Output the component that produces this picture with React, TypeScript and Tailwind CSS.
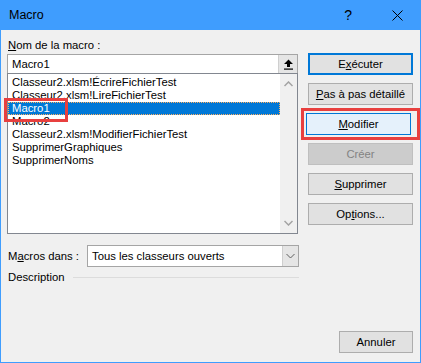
const items = [
  "Classeur2.xlsm!ÉcrireFichierTest",
  "Classeur2.xlsm!LireFichierTest",
  "Macro1",
  "Macro2",
  "Classeur2.xlsm!ModifierFichierTest",
  "SupprimerGraphiques",
  "SupprimerNoms",
];

const Btn = ({
  children,
  variant = "normal",
}: {
  children: React.ReactNode;
  variant?: "normal" | "default" | "hover" | "disabled";
}) => {
  const styles = {
    normal: "border border-[#adadad] bg-[#e1e1e1] text-black",
    default: "border-2 border-[#0078d7] bg-[#e1e1e1] text-black",
    hover: "border border-[#0078d7] bg-[#e5f1fb] text-black",
    disabled: "border border-[#bfbfbf] bg-[#cccccc] text-[#838383]",
  };
  return (
    <div className={`h-[22px] w-[105px] flex items-center justify-center ${styles[variant]}`}>
      {children}
    </div>
  );
};

const App = () => {
  return (
    <div
      className="w-[421px] h-[363px] flex flex-col text-[11.3px] text-black bg-[#f0f0f0]"
      style={{ fontFamily: '"Liberation Sans", Arial, sans-serif' }}
    >
      {/* title bar */}
      <div className="h-[30px] bg-[#3f9dfe] flex items-center pl-[9px] shrink-0">
        <span className="text-[12.5px] text-black">Macro</span>
        <span className="ml-auto mr-[40px] text-[14px]">?</span>
        <svg width="11" height="11" viewBox="0 0 11 11" className="mr-[18px]">
          <path d="M0.5 0.5 L10.5 10.5 M10.5 0.5 L0.5 10.5" stroke="#000" strokeWidth="1" />
        </svg>
      </div>

      <div className="flex-1 border-x border-b border-[#3f9dfe] flex flex-col">
        <div className="flex pl-[6px] pt-[7px]">
          {/* left column */}
          <div className="w-[291px] flex flex-col">
            <div className="h-[17px] leading-[16px] pl-[1px]">
              <u>N</u>om de la macro :
            </div>
            <div className="h-[20px] border border-[#a5a5a5] bg-white flex items-center">
              <span className="pl-[4px] flex-1">Macro1</span>
              <div className="w-[19px] h-[18px] bg-[#e5e5e5] border-l border-[#cfcfcf] flex items-center justify-center">
                <svg width="11" height="11" viewBox="0 0 11 11">
                  <path d="M5.5 0.5 L10 5 L7 5 L7 8 L4 8 L4 5 L1 5 Z" fill="#000" />
                  <rect x="1" y="9.5" width="9" height="1.2" fill="#000" />
                </svg>
              </div>
            </div>
            <div className="relative mt-[-1px] h-[161px] border border-[#828790] bg-white flex">
              <div className="flex-1 pt-[2px]">
                {items.map((it) =>
                  it === "Macro1" ? (
                    <div
                      key={it}
                      className="h-[13px] leading-[11px] bg-[#0078d7] text-white pl-[3px] border border-dotted border-[#ffb060]"
                    >
                      {it}
                    </div>
                  ) : (
                    <div key={it} className="h-[13px] leading-[13px] pl-[4px]">
                      {it}
                    </div>
                  )
                )}
              </div>
              <div className="w-[17px] bg-[#f0f0f0] flex flex-col items-center justify-between py-[7px]">
                <svg width="9" height="6" viewBox="0 0 9 6">
                  <path d="M0.5 5 L4.5 1 L8.5 5" stroke="#a3a3a3" strokeWidth="1.5" fill="none" />
                </svg>
                <svg width="9" height="6" viewBox="0 0 9 6">
                  <path d="M0.5 1 L4.5 5 L8.5 1" stroke="#a3a3a3" strokeWidth="1.5" fill="none" />
                </svg>
              </div>
              {/* red highlight over Macro1 */}
              <div className="absolute left-[-4px] top-[24px] w-[64px] h-[24px] border-[3px] border-[#e8403f]" />
            </div>
          </div>

          {/* right column */}
          <div className="ml-[10px] pt-[16px] flex flex-col gap-[8px]">
            <Btn variant="default">
              E<u>x</u>écuter
            </Btn>
            <Btn>
              <u>P</u>as à pas détaillé
            </Btn>
            <div className="-mx-[7px] -my-[5px] border-[3px] border-[#e8403f] p-[2px]">
              <Btn variant="hover">
                <u>M</u>odifier
              </Btn>
            </div>
            <Btn variant="disabled">Créer</Btn>
            <Btn>
              <u>S</u>upprimer
            </Btn>
            <Btn>
              Op<u>t</u>ions...
            </Btn>
          </div>
        </div>

        <div className="pl-[6px] mt-[11px] flex items-center w-[298px]">
          <span className="w-[80px] pl-[1px]">
            M<u>a</u>cros dans :
          </span>
          <div className="flex-1 h-[22px] border border-[#a5a5a5] bg-white flex items-center">
            <span className="pl-[4px] flex-1">Tous les classeurs ouverts</span>
            <div className="w-[16px] h-full bg-[#e5e5e5] border-l border-[#cfcfcf] flex items-center justify-center">
              <svg width="9" height="6" viewBox="0 0 9 6">
                <path d="M0.5 1 L4.5 5 L8.5 1" stroke="#606060" strokeWidth="1" fill="none" />
              </svg>
            </div>
          </div>
        </div>

        <div className="pl-[7px] mt-[2px] flex items-center w-[298px]">
          <span>Description</span>
          <div className="flex-1 ml-[8px] h-px bg-[#dcdcdc]" />
        </div>

        <div className="mt-auto mb-[9px] mr-[7px] flex justify-end">
          <div className="h-[22px] w-[74px] border border-[#adadad] bg-[#e1e1e1] flex items-center justify-center">
            Annuler
          </div>
        </div>
      </div>
    </div>
  );
};

export default App;
